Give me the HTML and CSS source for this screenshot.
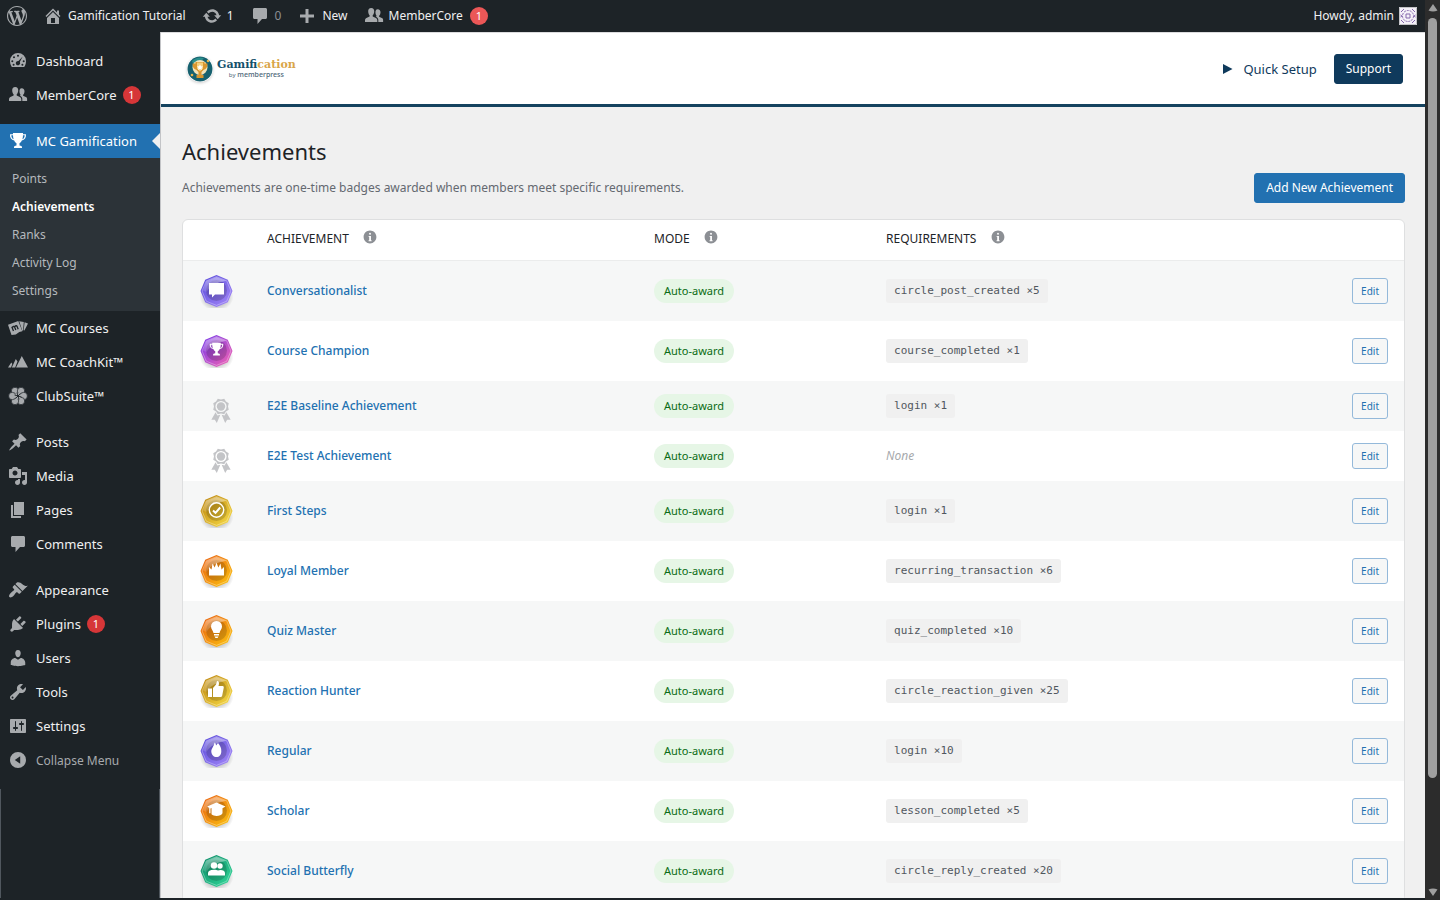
FILE: index.html
```html
<!DOCTYPE html>
<html lang="en">
<head>
    <meta charset="UTF-8">
    <meta name="viewport" content="width=device-width, initial-scale=1.0">
    <title>Achievements - Gamification Tutorial</title>
    <link rel="stylesheet" href="styles.css">
</head>
<body>
    <!-- icon sprite -->
    <svg class="sprite" aria-hidden="true">
        <defs>
            <linearGradient id="g-violet" x1="0" y1="0" x2="1" y2="1"><stop offset="0" stop-color="#5546d8"/><stop offset="1" stop-color="#a78bfa"/></linearGradient>
            <linearGradient id="g-pink" x1="0" y1="0" x2="1" y2="1"><stop offset="0.2" stop-color="#8b3fe0"/><stop offset="1" stop-color="#f765b0"/></linearGradient>
            <linearGradient id="g-gold" x1="0" y1="0" x2="1" y2="1"><stop offset="0" stop-color="#b87f08"/><stop offset="1" stop-color="#fbe04a"/></linearGradient>
            <linearGradient id="g-orange" x1="0" y1="0" x2="1" y2="1"><stop offset="0.1" stop-color="#ea650f"/><stop offset="1" stop-color="#fcc810"/></linearGradient>
            <linearGradient id="g-green" x1="0" y1="0" x2="1" y2="1"><stop offset="0" stop-color="#068562"/><stop offset="1" stop-color="#35dc9c"/></linearGradient>
            <linearGradient id="g-shine" x1="0" y1="0" x2="0" y2="1"><stop offset="0" stop-color="#fff" stop-opacity="0.5"/><stop offset="1" stop-color="#fff" stop-opacity="0.1"/></linearGradient>
            <radialGradient id="g-shadow"><stop offset="0.6" stop-color="#000" stop-opacity="0.2"/><stop offset="1" stop-color="#000" stop-opacity="0"/></radialGradient>
        </defs>
        <symbol id="i-wordpress" viewBox="0 0 20 20"><path d="M20 10c0-5.51-4.49-10-10-10C4.48 0 0 4.49 0 10c0 5.52 4.48 10 10 10 5.51 0 10-4.48 10-10zM7.78 15.37L4.37 6.22c.55-.02 1.17-.08 1.17-.08.5-.06.44-1.13-.06-1.11 0 0-1.45.11-2.37.11-.18 0-.37 0-.58-.01C4.12 2.69 6.87 1.11 10 1.11c2.33 0 4.45.87 6.05 2.34-.68-.11-1.65.39-1.65 1.58 0 .74.45 1.36.9 2.1.35.61.55 1.36.55 2.46 0 1.49-1.4 5-1.4 5l-3.03-8.37c.54-.02.82-.17.82-.17.5-.05.44-1.25-.06-1.22 0 0-1.44.12-2.38.12-.87 0-2.33-.12-2.33-.12-.5-.03-.56 1.2-.06 1.22l.92.08 1.26 3.41zM17.41 10c.24-.64.74-1.87.43-4.25.7 1.29 1.05 2.71 1.05 4.25 0 3.29-1.73 6.24-4.4 7.78.97-2.59 1.94-5.2 2.92-7.78zM6.1 18.09C3.12 16.65 1.11 13.53 1.11 10c0-1.3.23-2.48.72-3.59C3.25 10.3 4.67 14.2 6.1 18.09zm4.03-6.63l2.58 6.98c-.86.29-1.76.45-2.71.45-.79 0-1.57-.11-2.29-.33.81-2.38 1.62-4.74 2.42-7.1z"/></symbol>
        <symbol id="i-home" viewBox="0 0 20 20"><path d="M16 8.5l1.53 1.53-1.06 1.06L10 4.6l-6.47 6.49-1.06-1.06L10 2.5l4 4v-2h2v4zm-6-2.46l6 5.99V18H4v-5.97zM12 17v-5H8v5h4z"/></symbol>
        <symbol id="i-update" viewBox="0 0 20 20"><path d="M10.2 3.28c3.53 0 6.43 2.61 6.92 6h2.08l-3.5 4-3.5-4h2.32c-.45-1.97-2.21-3.45-4.32-3.45-1.45 0-2.73.71-3.54 1.78L4.95 5.66C6.23 4.2 8.11 3.28 10.2 3.28zm-.4 13.44c-3.52 0-6.43-2.61-6.92-6H.8l3.5-4c1.17 1.33 2.33 2.67 3.5 4H5.48c.45 1.97 2.21 3.45 4.32 3.45 1.45 0 2.73-.71 3.54-1.78l1.71 1.95c-1.28 1.46-3.15 2.38-5.25 2.38z"/></symbol>
        <symbol id="i-comment" viewBox="0 0 20 20"><path d="M4.5 2h11c.83 0 1.5.67 1.5 1.5v8c0 .83-.67 1.5-1.5 1.5H12l-4.500 5v-5h-3C3.670 13 3 12.330 3 11.500v-8C3 2.670 3.670 2 4.500 2z"/></symbol>
        <symbol id="i-plus" viewBox="0 0 20 20"><path d="M17 8.500v3h-5.500V17h-3v-5.500H3v-3h5.500V3h3v5.500z"/></symbol>
        <symbol id="i-groups" viewBox="0 0 20 20"><path d="M7.200 2C9.300 2 10.400 3.600 10.200 5.700c-.1 1.500-.7 2.900-1.500 3.500v1.300l3.200 1.400c1 .5 1.400 1.300 1.400 2.400V16H1v-1.700c0-1.100.4-1.900 1.400-2.400l3.200-1.400V9.200C4.800 8.600 4.300 7.200 4.200 5.700 4 3.600 5.100 2 7.200 2z"/><path d="M13.700 3.200c1.900 0 2.900 1.400 2.800 3.300-.1 1.400-.6 2.600-1.400 3.200v1.100l2.700 1.200c.9.400 1.300 1.100 1.300 2V16h-4.800v-1.900c0-1.500-.8-2.600-2-3.100l-.5-.3.700-.5v-.5c-.6-.6-.9-1.500-1-2.400-.2-2.200.3-4.100 2.200-4.100z"/></symbol>
        <symbol id="i-dashboard" viewBox="0 0 20 20"><path fill-rule="evenodd" d="M10 2a8 8 0 0 1 8 8c0 2.300-.6 4.300-1.800 6H3.800A9.600 9.600 0 0 1 2 10a8 8 0 0 1 8-8zm0 1.800a1 1 0 1 0 0 2 1 1 0 0 0 0-2zM6 5.300a1 1 0 1 0 0 2 1 1 0 0 0 0-2zm8.700.1L10.500 10a2.200 2.200 0 1 0 1.300.9zM4.300 9.200a1 1 0 1 0 0 2 1 1 0 0 0 0-2zm11.400 0a1 1 0 1 0 0 2 1 1 0 0 0 0-2zM5.600 12.800a1 1 0 1 0 0 2 1 1 0 0 0 0-2zm8.800 0a1 1 0 1 0 0 2 1 1 0 0 0 0-2z"/></symbol>
        <symbol id="i-trophy" viewBox="0 0 20 20"><path fill-rule="evenodd" d="M5 2h10v1.200h3c.2 3.600-1.300 5.700-4.200 6.300-.6 1.400-1.400 2.300-2.300 2.700v2.300c1.500.1 2.500.7 2.500 1.700v.8H6v-.8c0-1 1-1.600 2.500-1.700v-2.300c-.9-.4-1.700-1.300-2.300-2.700C3.300 8.900 1.800 6.800 2 3.200h3zM3.300 4.300c.1 2.200.8 3.400 2.300 3.900-.4-1.200-.6-2.500-.6-3.900zm11.700 0c0 1.400-.2 2.700-.6 3.900 1.500-.5 2.200-1.700 2.300-3.900z"/></symbol>
        <symbol id="i-courses" viewBox="0 0 20 20"><path d="M0 6.800L10.300 3l4 10.300-3 .7-3.500 2.500L3.500 17z"/><path d="M11.200 3.200l4.600.9-.7 8.400-.8.300zM16.600 4.300l3.400 1.200-3.600 7-.7-.2z"/><path d="M3.800 8.800l1.700 4.200M4.200 9.800c.7-1.500 2-1.700 2.400-.8l1.200 3M6.600 9c.8-1.500 2-1.600 2.500-.6l1.100 2.800" fill="none" stroke="#1d2327" stroke-width="1.300"/></symbol>
        <symbol id="i-coach" viewBox="0 0 20 20"><path d="M0 15.500l3.300-5 1 1.500L3 15.500zM3.800 15.500l4-8.500 1.700 2.500-2.300 6zM8 15.500L13.800 4 20 15.500z"/></symbol>
        <symbol id="i-club" viewBox="0 0 20 20"><g stroke="#1d2327" stroke-width="0.700"><circle cx="7" cy="5" r="3.700"/><circle cx="13" cy="5" r="3.700"/><circle cx="15.700" cy="10" r="3.700"/><circle cx="13" cy="15" r="3.700"/><circle cx="7" cy="15" r="3.700"/><circle cx="4.300" cy="10" r="3.700"/></g><circle cx="10" cy="10" r="3"/><path d="M10 10l2.500-2.500M10 10l3.500 1M10 10l1 3.500M10 10l-2.500 2.500M10 10L6.500 9M10 10L9 6.500" stroke="#1d2327" stroke-width="0.900"/><circle cx="10" cy="10" r="1.100" fill="#1d2327"/></symbol>
        <symbol id="i-post" viewBox="0 0 20 20"><path d="M10.440 3.020l1.820-1.820 6.360 6.350-1.830 1.820c-1.050-.68-2.480-.57-3.410.36l-.75.75c-.92.93-1.040 2.350-.35 3.410l-1.830 1.820-2.410-2.410-2.800 2.790c-.42.42-3.380 2.710-3.800 2.290s1.860-3.390 2.280-3.810l2.790-2.790L4.100 9.360l1.830-1.820c1.050.69 2.480.57 3.400-.36l.75-.75c.93-.92 1.050-2.350.36-3.410z"/></symbol>
        <symbol id="i-media" viewBox="0 0 20 20"><path d="M13 11V4c0-.55-.45-1-1-1h-1.670L9 1H5L3.670 3H2c-.55 0-1 .45-1 1v7c0 .55.45 1 1 1h10c.55 0 1-.45 1-1zM7 4.500c1.380 0 2.500 1.120 2.500 2.500S8.380 9.500 7 9.500 4.500 8.380 4.500 7 5.620 4.500 7 4.500zM14 6h5v10.500c0 1.380-1.120 2.500-2.500 2.500S14 17.880 14 16.500s1.120-2.500 2.500-2.500c.17 0 .34.020.5.050V9h-3V6zm-4 8.050V13h2v3.500c0 1.380-1.120 2.500-2.500 2.500S7 17.880 7 16.500 8.120 14 9.500 14c.17 0 .34.020.5.050z"/></symbol>
        <symbol id="i-page" viewBox="0 0 20 20"><path d="M6 15V2h10v13H6zm-1 1h8v2H3V5h2v11z"/></symbol>
        <symbol id="i-appearance" viewBox="0 0 20 20"><path d="M14.480 11.060L7.410 3.990l1.500-1.500c.5-.56 2.300-.47 3.510.32 1.210.8 1.430 1.280 2.910 2.100 1.180.64 2.450 1.260 4.450.85zm-.71.71L6.700 4.700 4.930 6.470c-.39.39-.39 1.020 0 1.410l1.060 1.060c.39.39.39 1.030 0 1.420-.6.6-1.430 1.110-2.210 1.690-.35.26-.7.53-1.010.84C1.430 14.230.4 16.080 1.400 17.070c.99 1 2.840-.03 4.180-1.360.31-.31.58-.66.85-1.020.57-.78 1.080-1.610 1.690-2.210.39-.39 1.020-.39 1.410 0l1.060 1.060c.39.39 1.020.39 1.410 0z"/></symbol>
        <symbol id="i-plugins" viewBox="0 0 20 20"><path d="M13.110 4.360L9.870 7.600 8 5.730l3.240-3.240c.35-.34 1.050-.2 1.560.32.52.51.66 1.210.31 1.550zm-8 1.770l.91-1.120 9.010 9.010-1.190.84c-.71.71-2.630 1.160-3.820 1.160H6.140L4.900 17.260c-.59.59-1.540.59-2.120 0-.59-.58-.59-1.530 0-2.120l1.240-1.240v-3.880c0-1.130.4-3.190 1.090-3.890zm7.260 3.970l3.240-3.240c.34-.35 1.040-.21 1.550.31.52.51.66 1.210.31 1.550l-3.240 3.250z"/></symbol>
        <symbol id="i-users" viewBox="0 0 20 20"><path d="M10 9.250c-2.270 0-2.730-3.440-2.730-3.440C7 4.020 7.820 2 9.970 2c2.160 0 2.980 2.020 2.710 3.810 0 0-.41 3.440-2.680 3.440zm0 2.570L12.720 10c2.390 0 4.520 2.330 4.520 4.530v2.490s-3.650 1.130-7.240 1.130c-3.650 0-7.240-1.130-7.240-1.130v-2.490c0-2.250 1.940-4.480 4.470-4.480z"/></symbol>
        <symbol id="i-tools" viewBox="0 0 20 20"><path d="M16.680 9.770c-1.340 1.340-3.300 1.670-4.950.99l-5.410 6.520c-.99.99-2.590.99-3.580 0s-.99-2.590 0-3.570l6.520-5.420c-.68-1.650-.35-3.610.99-4.950 1.280-1.280 3.120-1.620 4.720-1.060l-2.890 2.890 2.820 2.820 2.860-2.870c.53 1.580.18 3.390-1.080 4.650zM3.810 16.210c.4.39 1.040.39 1.430 0 .4-.4.4-1.040 0-1.430-.39-.4-1.030-.4-1.430 0-.39.39-.39 1.030 0 1.430z"/></symbol>
        <symbol id="i-settings" viewBox="0 0 20 20"><path d="M18 16V4c0-.55-.45-1-1-1H3c-.55 0-1 .45-1 1v12c0 .55.45 1 1 1h14c.55 0 1-.45 1-1zM8 11h1c.55 0 1 .45 1 1s-.45 1-1 1H8v1.500c0 .28-.22.5-.5.5s-.5-.22-.5-.5V13H6c-.55 0-1-.45-1-1s.45-1 1-1h1V5.500c0-.28.22-.5.5-.5s.5.22.5.5V11zm5-2h-1c-.55 0-1-.45-1-1s.45-1 1-1h1V5.500c0-.28.22-.5.5-.5s.5.22.5.5V7h1c.55 0 1 .45 1 1s-.45 1-1 1h-1v5.500c0 .28-.22.5-.5.5s-.5-.22-.5-.5V9z"/></symbol>
        <symbol id="i-collapse" viewBox="0 0 20 20"><path fill-rule="evenodd" d="M10 2a8 8 0 1 0 0 16 8 8 0 0 0 0-16zm2.200 4.300v7.400L6.800 10z"/></symbol>
        <symbol id="i-award" viewBox="0 0 20 20"><path fill-rule="evenodd" d="M4.460 5.160L5 7.460l-.54 2.290 2.010 1.240L7.700 13l2.300-.54 2.300.54 1.230-2.010 2.010-1.240L15 7.460l.54-2.300-2-1.240-1.240-2.010-2.300.55-2.290-.54-1.250 2zM10 11.500a4 4 0 1 1 0-8 4 4 0 0 1 0 8z"/><circle cx="10" cy="7.500" r="3"/><path d="M13.830 11.600l-1.280 2.240-2.080-.47L13 19.200l1.400-2.200h2.500zM6.130 11.670l1.250 2.250 2.130-.51L7 19.200 5.600 17H3.100z"/></symbol>
        <symbol id="i-info" viewBox="0 0 20 20"><path d="M10 2c4.420 0 8 3.580 8 8s-3.580 8-8 8-8-3.580-8-8 3.580-8 8-8zm1.200 4c0-.7-.5-1.200-1.200-1.200S8.800 5.300 8.800 6s.5 1.200 1.200 1.200 1.200-.5 1.200-1.200zm0 9V8.600H8.200v1.200h.8V14h-.8v1.200h3.800V14h-.8z"/></symbol>
        <!-- octagonal badge frame, painted with the current fill -->
        <symbol id="badge-frame" viewBox="0 0 34 34">
            <ellipse cx="17.500" cy="23" rx="17" ry="14" fill="url(#g-shadow)"/>
            <path d="M17.500 1l11.300 4.700L33.500 17l-4.700 11.300L17.500 33 6.200 28.300 1.500 17 6.200 5.700z"/>
            <path d="M17.500 2.600l10.200 4.200L31.900 17l-4.200 10.200-10.200 4.200-10.200-4.200L3.100 17 7.300 6.800z" fill="none" stroke="#fff" stroke-opacity="0.400" stroke-width="0.800"/>
            <circle cx="17.500" cy="16.500" r="10.500" fill="#000" fill-opacity="0.160"/>
            <path d="M17.500 3l9.800 4c-5 1-13 1-20 11L4 16.500 7.500 7z" fill="url(#g-shine)"/>
        </symbol>
    </svg>

    <div class="viewport">
        <header class="adminbar">
            <a href="#" class="bar-item" aria-label="About WordPress"><svg class="icon"><use href="#i-wordpress"/></svg></a>
            <a href="#" class="bar-item"><svg class="icon"><use href="#i-home"/></svg>Gamification Tutorial</a>
            <a href="#" class="bar-item"><svg class="icon"><use href="#i-update"/></svg>1</a>
            <a href="#" class="bar-item bar-muted"><svg class="icon"><use href="#i-comment"/></svg>0</a>
            <a href="#" class="bar-item"><svg class="icon"><use href="#i-plus"/></svg>New</a>
            <a href="#" class="bar-item"><svg class="icon"><use href="#i-groups"/></svg>MemberCore <span class="count count-light">1</span></a>
            <a href="#" class="bar-item bar-account">Howdy, admin
                <svg class="avatar" viewBox="0 0 18 18"><path fill="#f4f1f8" d="M0 0h18v18H0z"/><path fill="none" stroke="#c4c4c8" d="M.5.5h17v17H.5z"/><g fill="none" stroke="#8568ad"><circle cx="9" cy="9" r="5.500" stroke-dasharray="2 1"/><path d="M6 8h2V6M12 8h-2V6M6 10h2v2M12 10h-2v2M2 5l3-3M13 2l3 3M2 13l3 3M16 13l-3 3M1.500 8l1.500 1-1.500 1M16.500 8L15 9l1.500 1"/></g></svg>
            </a>
        </header>

        <div class="wrap">
            <nav class="sidebar">
                <ul class="menu">
                    <li><a href="#"><svg class="icon"><use href="#i-dashboard"/></svg>Dashboard</a></li>
                    <li><a href="#"><svg class="icon"><use href="#i-groups"/></svg>MemberCore <span class="count">1</span></a></li>
                    <li class="separator"></li>
                    <li class="current">
                        <a href="#"><svg class="icon"><use href="#i-trophy"/></svg>MC Gamification</a>
                        <ul class="submenu">
                            <li><a href="#">Points</a></li>
                            <li><a href="#" class="active">Achievements</a></li>
                            <li><a href="#">Ranks</a></li>
                            <li><a href="#">Activity Log</a></li>
                            <li><a href="#">Settings</a></li>
                        </ul>
                    </li>
                    <li><a href="#"><svg class="icon"><use href="#i-courses"/></svg>MC Courses</a></li>
                    <li><a href="#"><svg class="icon"><use href="#i-coach"/></svg>MC CoachKit™</a></li>
                    <li><a href="#"><svg class="icon"><use href="#i-club"/></svg>ClubSuite™</a></li>
                    <li class="separator"></li>
                    <li><a href="#"><svg class="icon"><use href="#i-post"/></svg>Posts</a></li>
                    <li><a href="#"><svg class="icon"><use href="#i-media"/></svg>Media</a></li>
                    <li><a href="#"><svg class="icon"><use href="#i-page"/></svg>Pages</a></li>
                    <li><a href="#"><svg class="icon"><use href="#i-comment"/></svg>Comments</a></li>
                    <li class="separator"></li>
                    <li><a href="#"><svg class="icon"><use href="#i-appearance"/></svg>Appearance</a></li>
                    <li><a href="#"><svg class="icon"><use href="#i-plugins"/></svg>Plugins <span class="count">1</span></a></li>
                    <li><a href="#"><svg class="icon"><use href="#i-users"/></svg>Users</a></li>
                    <li><a href="#"><svg class="icon"><use href="#i-tools"/></svg>Tools</a></li>
                    <li><a href="#"><svg class="icon"><use href="#i-settings"/></svg>Settings</a></li>
                    <li><button type="button" class="collapse"><svg class="icon"><use href="#i-collapse"/></svg>Collapse Menu</button></li>
                </ul>
                <div class="sidebar-rest"></div>
            </nav>

            <main class="content">
                <div class="plugin-header">
                    <a href="#" class="logo">
                        <svg class="logo-mark" viewBox="0 0 26 26"><circle cx="13" cy="13" r="12.500" fill="#17616f"/><path d="M5 5a12 12 0 0 1 12-3L8 12z" fill="#2b8f8d"/><circle cx="13" cy="11.500" r="7.500" fill="#f4e3b8"/><path d="M8.500 6h9v1.500h3c0 3.500-1 5.500-4 6.500l-2 2v3h2v3h-7v-3h2v-3l-2-2c-3-1-4-3-4-6.500h3z" fill="#d9962f"/><path d="M10 6.500h6v6l-3 3-3-3z" fill="#f6cf7d"/><path d="M13 8.500l1 1.800 2 .2-1.500 1.400.4 2-1.900-1-1.900 1 .4-2-1.500-1.400 2-.2z" fill="#fff"/><circle cx="21" cy="5" r="1.300" fill="#e7b34c"/><circle cx="5" cy="19" r="1.300" fill="#e7b34c"/></svg>
                        <span class="logo-text">
                            <span class="logo-name">Gamifi<span class="logo-gold">cation</span></span>
                            <span class="logo-by"><small>by</small> memberpress</span>
                        </span>
                    </a>
                    <div class="header-actions">
                        <a href="#" class="quick-setup"><svg class="play" viewBox="0 0 10 10"><path d="M0 0l9.500 5L0 10z"/></svg>Quick Setup</a>
                        <a href="#" class="btn btn-dark">Support</a>
                    </div>
                </div>

                <section class="page">
                    <h1>Achievements</h1>
                    <div class="page-intro">
                        <p>Achievements are one-time badges awarded when members meet specific requirements.</p>
                        <a href="#" class="btn btn-primary">Add New Achievement</a>
                    </div>

                    <div class="table-box">
                    <table class="achievements">
                        <colgroup>
                            <col class="col-badge"><col class="col-name"><col class="col-mode"><col><col class="col-edit">
                        </colgroup>
                        <thead>
                            <tr>
                                <th></th>
                                <th>ACHIEVEMENT <svg class="info"><use href="#i-info"/></svg></th>
                                <th>MODE <svg class="info"><use href="#i-info"/></svg></th>
                                <th>REQUIREMENTS <svg class="info"><use href="#i-info"/></svg></th>
                                <th></th>
                            </tr>
                        </thead>
                        <tbody>
                            <tr>
                                <td><svg class="badge" viewBox="0 0 34 34"><use href="#badge-frame" fill="url(#g-violet)"/><path fill="#fff" d="M10 9h15v11.500h-9l-3 3v-3h-3z"/></svg></td>
                                <td><a href="#">Conversationalist</a></td>
                                <td><span class="mode">Auto-award</span></td>
                                <td><code>circle_post_created ×5</code></td>
                                <td><button type="button" class="edit">Edit</button></td>
                            </tr>
                            <tr>
                                <td><svg class="badge" viewBox="0 0 34 34"><use href="#badge-frame" fill="url(#g-pink)"/><use href="#i-trophy" x="9" y="7" width="17" height="17" fill="#fff"/></svg></td>
                                <td><a href="#">Course Champion</a></td>
                                <td><span class="mode">Auto-award</span></td>
                                <td><code>course_completed ×1</code></td>
                                <td><button type="button" class="edit">Edit</button></td>
                            </tr>
                            <tr class="no-badge">
                                <td><svg class="award"><use href="#i-award"/></svg></td>
                                <td><a href="#">E2E Baseline Achievement</a></td>
                                <td><span class="mode">Auto-award</span></td>
                                <td><code>login ×1</code></td>
                                <td><button type="button" class="edit">Edit</button></td>
                            </tr>
                            <tr class="no-badge">
                                <td><svg class="award"><use href="#i-award"/></svg></td>
                                <td><a href="#">E2E Test Achievement</a></td>
                                <td><span class="mode">Auto-award</span></td>
                                <td><em>None</em></td>
                                <td><button type="button" class="edit">Edit</button></td>
                            </tr>
                            <tr>
                                <td><svg class="badge" viewBox="0 0 34 34"><use href="#badge-frame" fill="url(#g-gold)"/><g fill="none" stroke="#fff"><circle cx="17.500" cy="16" r="7.200" stroke-width="1.400"/><path d="M14 16.500l2.500 2.300 4.700-5.300" stroke-width="2"/></g></svg></td>
                                <td><a href="#">First Steps</a></td>
                                <td><span class="mode">Auto-award</span></td>
                                <td><code>login ×1</code></td>
                                <td><button type="button" class="edit">Edit</button></td>
                            </tr>
                            <tr>
                                <td><svg class="badge" viewBox="0 0 34 34"><use href="#badge-frame" fill="url(#g-orange)"/><path fill="#fff" d="M10 21.500v-8.500l2.500 2.500 1-6 2.200 4 1.800-5 1.800 5 2.200-4 1 6L25 13v8.500z"/></svg></td>
                                <td><a href="#">Loyal Member</a></td>
                                <td><span class="mode">Auto-award</span></td>
                                <td><code>recurring_transaction ×6</code></td>
                                <td><button type="button" class="edit">Edit</button></td>
                            </tr>
                            <tr>
                                <td><svg class="badge" viewBox="0 0 34 34"><use href="#badge-frame" fill="url(#g-orange)"/><path fill="#fff" d="M17.500 7a5.500 5.500 0 0 1 5.500 5.500c0 2.800-2 3.800-2.500 6.500h-6c-.5-2.700-2.500-3.700-2.500-6.500A5.500 5.500 0 0 1 17.500 7zM15 20h5v1.500h-5zM15.500 22.500h4l-1 1.500h-2z"/></svg></td>
                                <td><a href="#">Quiz Master</a></td>
                                <td><span class="mode">Auto-award</span></td>
                                <td><code>quiz_completed ×10</code></td>
                                <td><button type="button" class="edit">Edit</button></td>
                            </tr>
                            <tr>
                                <td><svg class="badge" viewBox="0 0 34 34"><use href="#badge-frame" fill="url(#g-gold)"/><path fill="#fff" d="M9 14.500h4V23H9zM14 14l3-3.500 1-3.500c2 0 2.500 2 1.500 5h4.200c1 0 1.300 1 1 2l-1.500 7.500c-.2 1-1 1.500-2 1.500H14z"/></svg></td>
                                <td><a href="#">Reaction Hunter</a></td>
                                <td><span class="mode">Auto-award</span></td>
                                <td><code>circle_reaction_given ×25</code></td>
                                <td><button type="button" class="edit">Edit</button></td>
                            </tr>
                            <tr>
                                <td><svg class="badge" viewBox="0 0 34 34"><use href="#badge-frame" fill="url(#g-violet)"/><path fill="#fff" d="M15.500 8.500c1.200 1 1.500 2 1.500 3l2-2.500c2.200 2.500 3.500 5 3.300 8.500-.1 3.500-2 5.500-4.800 5.500s-5-2-5.200-5.500c-.1-3 2.700-5 3.200-9z"/></svg></td>
                                <td><a href="#">Regular</a></td>
                                <td><span class="mode">Auto-award</span></td>
                                <td><code>login ×10</code></td>
                                <td><button type="button" class="edit">Edit</button></td>
                            </tr>
                            <tr>
                                <td><svg class="badge" viewBox="0 0 34 34"><use href="#badge-frame" fill="url(#g-orange)"/><path fill="#fff" d="M17.500 8.500l9 4-3 1.800v5c-1 1.800-3.200 2.700-6 2.700-2 0-3.700-.6-5-1.700v-6.200l-1 .4v4.800h-1.300V14l-2-1.500z"/></svg></td>
                                <td><a href="#">Scholar</a></td>
                                <td><span class="mode">Auto-award</span></td>
                                <td><code>lesson_completed ×5</code></td>
                                <td><button type="button" class="edit">Edit</button></td>
                            </tr>
                            <tr>
                                <td><svg class="badge" viewBox="0 0 34 34"><use href="#badge-frame" fill="url(#g-green)"/><g fill="#fff"><circle cx="15" cy="11.500" r="3.200"/><circle cx="21" cy="12" r="2.700"/><path d="M9 21.500v-2.500c0-2 2-3.300 6-3.300 2 0 3 .3 4 .8 1-.4 1.500-.6 2.500-.6 2.500 0 4.500 1 4.500 3v2.600z"/></g></svg></td>
                                <td><a href="#">Social Butterfly</a></td>
                                <td><span class="mode">Auto-award</span></td>
                                <td><code>circle_reply_created ×20</code></td>
                                <td><button type="button" class="edit">Edit</button></td>
                            </tr>
                        </tbody>
                    </table>
                    </div>
                </section>
            </main>
        </div>
    </div>

    <div class="scrollbar" aria-hidden="true">
        <svg class="arrow" viewBox="0 0 10 8"><path d="M5 0l4.500 6.500Q5 8.500.5 6.500z"/></svg>
        <div class="track"><div class="thumb"></div></div>
        <svg class="arrow" viewBox="0 0 10 8"><path d="M5 8L.5 1.500Q5-.5 9.500 1.500z"/></svg>
    </div>
</body>
</html>
```
FILE: styles.css
```css
:root {
    --dark: #1d2327;
    --blue: #2271b1;
    --navy: #0f3a5c;
    --icon: #a7aaad;
    --page-bg: #f0f0f0;
}

* {
    box-sizing: border-box;
}

body {
    margin: 0;
    height: 100vh;
    display: flex;
    overflow: hidden;
    background: var(--dark);
    font-family: "Segoe UI", "Noto Sans", "Open Sans", sans-serif;
    font-size: 12px;
    line-height: 20px;
    color: #3c434a;
}

a {
    text-decoration: none;
    color: var(--blue);
}

button {
    font-family: inherit;
    cursor: pointer;
}

ul {
    list-style: none;
    margin: 0;
    padding: 0;
}

.sprite {
    position: absolute;
    width: 0;
    height: 0;
}

.icon {
    width: 20px;
    height: 20px;
    flex: none;
    fill: var(--icon);
}

.viewport {
    flex: 1;
    min-width: 0;
    display: flex;
    flex-direction: column;
    border-bottom: 2px solid var(--dark);
}

/* admin bar */
.adminbar {
    height: 32px;
    flex: none;
    display: flex;
    align-items: center;
    gap: 16px;
    padding: 0 8px 0 7px;
    background: var(--dark);
}

.bar-item {
    display: flex;
    align-items: center;
    gap: 5px;
    color: #f0f0f1;
}

.bar-muted {
    color: #8c8f94;
}

.bar-account {
    margin-left: auto;
}

.avatar {
    width: 18px;
    height: 18px;
}

.count {
    width: 18px;
    height: 18px;
    margin-left: 2px;
    border-radius: 9px;
    background: #d63638;
    color: #fff;
    font-size: 11px;
    line-height: 18px;
    text-align: center;
}

.count-light {
    background: #eb5757;
}

.wrap {
    flex: 1;
    min-height: 0;
    display: flex;
}

/* sidebar */
.sidebar {
    width: 160px;
    flex: none;
    display: flex;
    flex-direction: column;
    background: var(--dark);
}

.menu {
    padding: 12px 0;
}

.menu a,
.collapse {
    height: 34px;
    display: flex;
    align-items: center;
    gap: 8px;
    padding: 0 8px;
    font-size: 13px;
    color: #f0f0f1;
    white-space: nowrap;
}

.menu .count {
    margin-left: -2px;
}

.collapse {
    width: 100%;
    border: 0;
    background: none;
    color: var(--icon);
    font-size: 12px;
}

.separator {
    height: 12px;
}

.current > a {
    position: relative;
    background: var(--blue);
    color: #fff;
}

.current > a .icon {
    fill: #fff;
}

.current > a::after {
    content: "";
    position: absolute;
    right: 0;
    top: 9px;
    border: 8px solid transparent;
    border-left: 0;
    border-right-color: var(--page-bg);
}

.submenu {
    padding: 7px 0 6px;
    background: #2c3338;
}

.submenu a {
    height: 28px;
    padding: 0 12px;
    font-size: 12px;
    color: #b5b9bd;
}

.submenu .active {
    color: #fff;
    font-weight: 600;
}

.sidebar-rest {
    flex: 1;
    border: solid #50575e;
    border-width: 0 1px;
}

/* plugin header */
.content {
    flex: 1;
    min-width: 0;
    overflow: hidden;
    background: var(--page-bg);
    border-left: 1px solid #c3c4c7;
}

.plugin-header {
    height: 75px;
    display: flex;
    align-items: center;
    justify-content: space-between;
    padding: 0 22px 0 26px;
    background: #fff;
    border-top: 1px solid #dcdcde;
    border-bottom: 3px solid #15435f;
}

.logo {
    display: flex;
    align-items: center;
    gap: 4px;
}

.logo-mark {
    width: 26px;
    height: 26px;
    border-radius: 50%;
    box-shadow: 0 1px 3px rgba(0, 0, 0, 0.2);
}

.logo-text {
    display: flex;
    flex-direction: column;
    align-items: center;
}

.logo-name {
    font: bold 11px/12px "DejaVu Serif", serif;
    color: #14506b;
}

.logo-gold {
    color: #d9a548;
}

.logo-by {
    font-size: 7px;
    line-height: 8px;
    font-weight: 500;
    color: #4b6577;
}

.logo-by small {
    font-size: 6px;
    font-weight: 400;
}

.header-actions {
    display: flex;
    align-items: center;
    gap: 17px;
}

.quick-setup {
    display: flex;
    align-items: center;
    gap: 10px;
    font-size: 13px;
    color: var(--navy);
}

.play {
    width: 10px;
    height: 10px;
    fill: var(--navy);
}

.btn {
    padding: 0 11px;
    border: 1px solid;
    border-radius: 3px;
    line-height: 28px;
    color: #fff;
    white-space: nowrap;
}

.btn-dark {
    background: var(--navy);
    border-color: var(--navy);
}

.btn-primary {
    background: var(--blue);
    border-color: var(--blue);
}

/* page */
.page {
    padding: 29px 20px 0 21px;
}

h1 {
    margin: 0 0 7px;
    font-size: 22px;
    line-height: 30px;
    font-weight: 400;
    color: #1d2327;
}

.page-intro {
    display: flex;
    align-items: center;
    justify-content: space-between;
    margin-bottom: 16px;
}

.page-intro p {
    margin: 0;
    color: #646970;
}

.table-box {
    border: 1px solid #dedfe0;
    border-radius: 6px;
    overflow: hidden;
    background: #fff;
}

.achievements {
    width: 100%;
    table-layout: fixed;
    border-collapse: separate;
    border-spacing: 0;
}

.col-badge { width: 68px; }
.col-name { width: 31.7%; }
.col-mode { width: 19%; }
.col-edit { width: 80px; }

th {
    height: 41px;
    padding: 0 16px 2px;
    border-bottom: 1px solid #ebecec;
    font-weight: 400;
    text-align: left;
    color: #1d2327;
}

.info {
    width: 16px;
    height: 16px;
    margin-left: 10px;
    vertical-align: -2px;
    fill: #8c8f94;
}

td {
    height: 60px;
    padding: 0 16px;
}

.no-badge td {
    height: 50px;
}

tbody tr:nth-child(odd) {
    background: #f6f7f7;
}

.badge,
.award {
    display: block;
    width: 34px;
    height: 34px;
}

.no-badge td:first-child {
    padding: 8px 0 0 24px;
}

.award {
    width: 28px;
    height: 28px;
    fill: #c3c4c7;
}

td a {
    font-weight: 500;
}

.mode {
    display: inline-block;
    padding: 0 10px;
    border-radius: 12px;
    background: #e6f6e6;
    color: #0a6b14;
    font-size: 11px;
    line-height: 24px;
}

code {
    display: inline-block;
    padding: 0 8px;
    border-radius: 3px;
    background: #f0f0f0;
    color: #50575e;
    font: 11px/24px Consolas, "DejaVu Sans Mono", monospace;
}

em {
    color: #a7aaad;
}

td:last-child {
    text-align: right;
}

.edit {
    padding: 0 8px;
    border: 1px solid #94b9da;
    border-radius: 3px;
    background: #f6f7f7;
    color: var(--blue);
    font-size: 10px;
    line-height: 24px;
}

/* window scrollbar */
.scrollbar {
    width: 15px;
    flex: none;
    display: flex;
    flex-direction: column;
    align-items: center;
    padding: 4px 0;
    background: #2c2c2c;
}

.arrow {
    width: 10px;
    height: 8px;
    fill: #9f9f9f;
}

.track {
    flex: 1;
    padding: 6px 0;
}

.thumb {
    width: 9px;
    height: 88%;
    border-radius: 5px;
    background: #9f9f9f;
}
```
